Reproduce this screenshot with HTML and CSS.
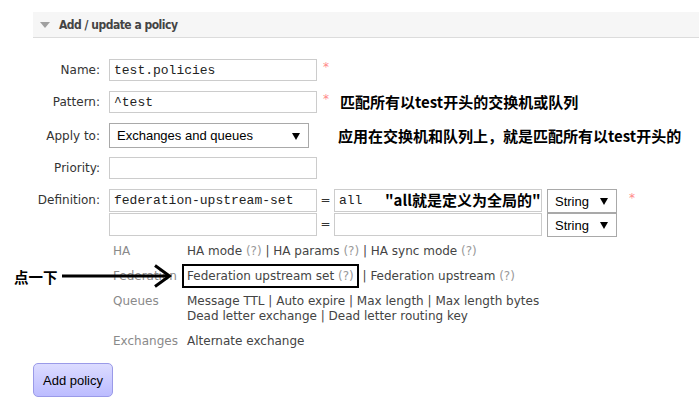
FILE: index.html
```html
<!DOCTYPE html>
<html>
<head>
<meta charset="utf-8">
<link rel="stylesheet" href="styles.css">
</head>
<body>
<div class="section">
  <div class="hdr">
    <svg class="tri" width="10" height="6" viewBox="0 0 10 6"><path d="M0 0H10L5 6Z" fill="#a0a0a0"/></svg>
    <h2>Add / update a policy</h2>
  </div>
  <div class="form">
    <div class="row">
      <label class="lbl">Name:</label>
      <input class="inp" type="text" value="test.policies">
      <span class="star">*</span>
    </div>
    <div class="row">
      <label class="lbl">Pattern:</label>
      <input class="inp" type="text" value="^test">
      <span class="star">*</span>
      <span class="note n1">匹配所有以test开头的交换机或队列</span>
    </div>
    <div class="row applyrow">
      <label class="lbl">Apply to:</label>
      <select class="sel apply"><option>Exchanges and queues</option></select>
      <span class="note n2">应用在交换机和队列上，就是匹配所有以test开头的</span>
    </div>
    <div class="row">
      <label class="lbl">Priority:</label>
      <input class="inp" type="text" value="">
    </div>
    <div class="row top">
      <label class="lbl deflbl">Definition:</label>
      <div class="defs">
        <div class="defrow">
          <input class="inp" type="text" value="federation-upstream-set">
          <span class="eq">=</span>
          <div class="valwrap">
            <input class="inp" type="text" value="all">
            <span class="note n3">"all就是定义为全局的"</span>
          </div>
          <select class="sel typ"><option>String</option></select>
          <span class="star star2">*</span>
        </div>
        <div class="defrow">
          <input class="inp" type="text" value="">
          <span class="eq">=</span>
          <div class="valwrap"><input class="inp" type="text" value=""></div>
          <select class="sel typ"><option>String</option></select>
        </div>
      </div>
    </div>
    <div class="help">
      <div class="hrow"><span class="cat">HA</span><span class="links">HA mode <span class="q">(?)</span> | HA params <span class="q">(?)</span> | HA sync mode <span class="q">(?)</span></span></div>
      <div class="hrow fed"><span class="cat">Federation</span><span class="links"><span class="boxed">Federation upstream set <span class="q">(?)</span></span> | Federation upstream <span class="q">(?)</span></span>
        <div class="clickme"><span class="cm-text">点一下</span><svg class="arrow" width="112" height="24" viewBox="0 0 112 24"><path d="M0 12H107" stroke="#000" stroke-width="3"/><path d="M93 1.5L107.5 12L93 22.5" stroke="#000" stroke-width="3" fill="none"/></svg></div>
      </div>
      <div class="hrow"><span class="cat">Queues</span><span class="links">Message TTL | Auto expire | Max length | Max length bytes<br>Dead letter exchange | Dead letter routing key</span></div>
      <div class="hrow"><span class="cat">Exchanges</span><span class="links">Alternate exchange</span></div>
    </div>
    <button class="btn">Add policy</button>
  </div>
</div>
</body>
</html>
```

FILE: styles.css
```css
html, body {
  margin: 0;
  padding: 0;
  background: #fff;
}
body {
  font-family: "DejaVu Sans", Verdana, sans-serif;
  font-size: 12px;
  color: #333;
}
.section {
  margin: 12px 0 0 33px;
  position: relative;
}
.hdr {
  height: 25px;
  background: #f6f6f6;
  border-bottom: 1px solid #dcdcdc;
  display: flex;
  align-items: center;
  padding-left: 7px;
}
.tri {
  margin-right: 9px;
}
.hdr h2 {
  margin: 0;
  font-family: "DejaVu Sans Condensed", "DejaVu Sans", sans-serif;
  font-stretch: condensed;
  font-size: 12px;
  letter-spacing: -0.5px;
  font-weight: bold;
  color: #444;
}
.form {
  padding-top: 21px;
}
.row {
  display: flex;
  align-items: center;
  margin-bottom: 10px;
  height: 22px;
}
.row.applyrow {
  height: 25px;
  margin-bottom: 9px;
}
.row.top {
  align-items: flex-start;
  margin-bottom: 0;
  height: auto;
}
.lbl {
  width: 67px;
  text-align: right;
  margin-right: 9px;
  color: #333;
  white-space: nowrap;
}
.deflbl {
  line-height: 23px;
}
.inp {
  box-sizing: border-box;
  width: 208px;
  height: 22px;
  margin: 0;
  border: 1px solid #ccc;
  padding: 0 4px;
  font-family: "Liberation Mono", "Courier New", monospace;
  font-size: 13px;
  color: #222;
  background: #fff;
  outline: none;
}
.star {
  color: #f88;
  font-size: 12px;
  margin-left: 6px;
  align-self: flex-start;
  line-height: 14px;
  margin-top: 1px;
}
.note {
  font-family: "Noto Sans CJK SC", "Microsoft YaHei", sans-serif;
  font-weight: bold;
  font-size: 15px;
  line-height: 20px;
  color: #000;
  white-space: nowrap;
}
.n1 {
  margin-left: 11px;
}
.n2 {
  margin-left: 29px;
}
.sel {
  box-sizing: border-box;
  -webkit-appearance: none;
  appearance: none;
  margin: 0;
  height: 25px;
  border: 1px solid #a9a9a9;
  background: #fff url("data:image/svg+xml;utf8,<svg xmlns='http://www.w3.org/2000/svg' width='8' height='8'><path d='M0 1H8L4 8Z' fill='black'/></svg>") no-repeat right 8px center;
  font-family: "Liberation Sans", Arial, sans-serif;
  font-size: 13px;
  color: #000;
  padding: 0 20px 0 7px;
  border-radius: 0;
}
.apply {
  width: 200px;
}
.defs {
  display: flex;
  flex-direction: column;
}
.defrow {
  display: flex;
  align-items: flex-start;
  height: 24px;
}
.defrow .inp {
  height: 23px;
}
.eq {
  width: 17px;
  text-align: center;
  line-height: 22px;
  color: #333;
}
.valwrap {
  position: relative;
}
.n3 {
  position: absolute;
  left: 51px;
  top: 1px;
  line-height: 20px;
}
.typ {
  width: 70px;
  height: 24px;
  margin-left: 5px;
}
.star2 {
  margin-left: 12px;
  margin-top: 2px;
}
.help {
  margin: 7px 0 0 80px;
}
.hrow {
  display: flex;
  line-height: 15px;
  margin-bottom: 10px;
  position: relative;
}
.cat {
  width: 74px;
  color: #8a8a8a;
  flex: none;
}
.links {
  color: #444;
}
.q {
  color: #999;
}
.boxed {
  border: 2px solid #000;
  padding: 3px 3px;
  margin-left: -5px;
}
.clickme {
  position: absolute;
  left: -99px;
  top: -5px;
  display: flex;
  align-items: center;
}
.cm-text {
  font-family: "Noto Sans CJK SC", "Microsoft YaHei", sans-serif;
  font-weight: bold;
  font-size: 14.5px;
  color: #000;
  margin-right: 4px;
}
.arrow {
  display: block;
}
.btn {
  margin-top: 4px;
  width: 80px;
  height: 34px;
  border: 1px solid #9a9ae8;
  border-radius: 5px;
  background: linear-gradient(#dcdcff, #bcbcff);
  font-family: "Liberation Sans", Arial, sans-serif;
  font-size: 13px;
  color: #000;
  padding: 0;
}
```
